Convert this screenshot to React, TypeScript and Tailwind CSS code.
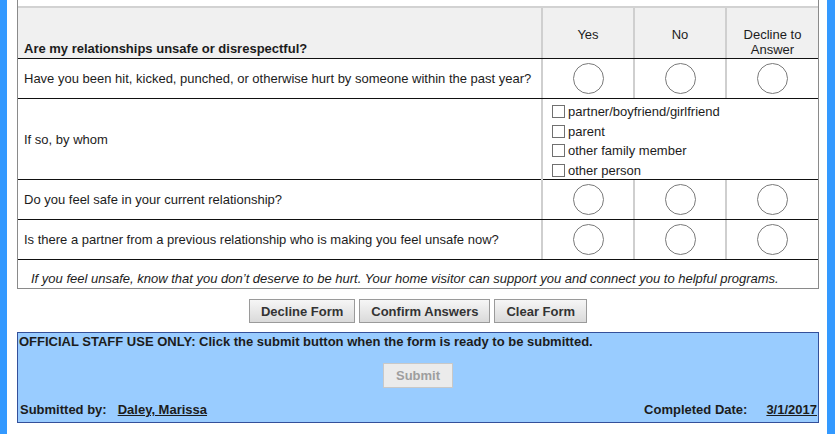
import React from 'react';

const questions = [
  'Have you been hit, kicked, punched, or otherwise hurt by someone within the past year?',
  'Do you feel safe in your current relationship?',
  'Is there a partner from a previous relationship who is making you feel unsafe now?',
];

const whom = ['partner/boyfriend/girlfriend', 'parent', 'other family member', 'other person'];

const Radio = () => (
  <div className="flex items-center justify-center border-l-2 border-[#cfcfcf]">
    <span className="block h-[31px] w-[31px] rounded-full border border-[#7a7a7a] bg-white" />
  </div>
);

const QuestionRow = ({ text }: { text: string }) => (
  <div className="grid h-[40px] grid-cols-[523px_92px_92px_1fr] border-b border-[#111]">
    <div className="flex items-center pl-[6px]">{text}</div>
    <Radio />
    <Radio />
    <Radio />
  </div>
);

const FormButton = ({ label }: { label: string }) => (
  <button className="h-[24px] border border-[#9a9a9a] bg-gradient-to-b from-[#f6f6f6] to-[#dadada] px-[11px] font-bold text-[#333]">
    {label}
  </button>
);

export default function App() {
  return (
    <div className="h-[434px] w-[835px] overflow-hidden bg-[#3399ff] font-['Liberation_Sans',Arial,sans-serif] text-[13px] leading-[15px] text-[#1c1c1c]">
      <div className="ml-[7px] h-full w-[820px] bg-white pl-[10px] pr-[8px]">
        {/* questionnaire table */}
        <div className="border-x border-b border-[#8a8a8a]">
          <div className="h-[6px]" />
          <div className="grid h-[53px] grid-cols-[523px_92px_92px_1fr] border-t-2 border-b border-t-[#d2d2d2] border-b-[#111] bg-[#f0f0f0]">
            <div className="flex items-end pb-[2px] pl-[6px] font-bold">Are my relationships unsafe or disrespectful?</div>
            <div className="border-l-2 border-[#cfcfcf] pt-[19px] text-center">Yes</div>
            <div className="border-l-2 border-[#cfcfcf] pt-[19px] text-center">No</div>
            <div className="border-l-2 border-[#cfcfcf] pt-[19px] text-center">
              Decline to
              <br />
              Answer
            </div>
          </div>

          <QuestionRow text={questions[0]} />

          <div className="grid h-[81px] grid-cols-[523px_1fr] border-b border-[#111]">
            <div className="flex items-center pl-[6px]">If so, by whom</div>
            <div className="border-l-2 border-[#cfcfcf] pl-[9px] pt-[3px]">
              {whom.map((w) => (
                <div key={w} className="flex h-[19.5px] items-center gap-[3px]">
                  <span className="block h-[13px] w-[13px] border border-[#707070] bg-white" />
                  <span>{w}</span>
                </div>
              ))}
            </div>
          </div>

          <QuestionRow text={questions[1]} />
          <QuestionRow text={questions[2]} />

          <div className="flex h-[28px] items-end pb-[2px] pl-[13px] italic">
            If you feel unsafe, know that you don’t deserve to be hurt. Your home visitor can support you and connect you to helpful programs.
          </div>
        </div>

        {/* actions */}
        <div className="mt-[10px] flex justify-center gap-[4px]">
          <FormButton label="Decline Form" />
          <FormButton label="Confirm Answers" />
          <FormButton label="Clear Form" />
        </div>

        {/* staff section */}
        <div className="mt-[9px] h-[91px] border border-[#34509a] bg-[#99ccff] px-px font-bold">
          <div className="pt-px">OFFICIAL STAFF USE ONLY: Click the submit button when the form is ready to be submitted.</div>
          <div className="mt-[14px] flex justify-center">
            <button disabled className="h-[25px] border border-[#c8c8c8] bg-[#ebebeb] px-[12px] font-bold text-[#9e9e9e]">
              Submit
            </button>
          </div>
          <div className="mt-[14px] flex items-center justify-between pl-px">
            <div>
              Submitted by:<span className="ml-[11px] underline">Daley, Marissa</span>
            </div>
            <div>
              Completed Date:<span className="ml-[19px] underline">3/1/2017</span>
            </div>
          </div>
        </div>
      </div>
    </div>
  );
}
